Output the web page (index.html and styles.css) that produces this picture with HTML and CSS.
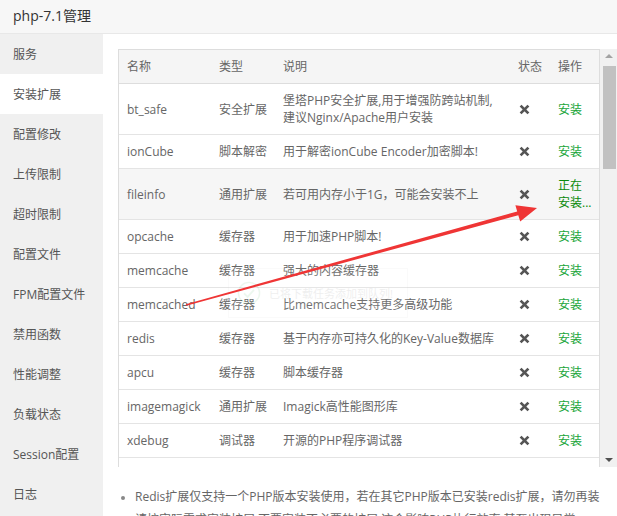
FILE: index.html
```html
<!DOCTYPE html>
<html lang="zh-CN">
<head>
<meta charset="utf-8">
<title>php-7.1管理</title>
<link rel="stylesheet" href="styles.css">
</head>
<body>
<div class="page">
  <div class="titlebar">php-7.1管理</div>
  <div class="main">
    <ul class="sidebar">
      <li>服务</li>
      <li class="active">安装扩展</li>
      <li>配置修改</li>
      <li>上传限制</li>
      <li>超时限制</li>
      <li>配置文件</li>
      <li>FPM配置文件</li>
      <li>禁用函数</li>
      <li>性能调整</li>
      <li>负载状态</li>
      <li>Session配置</li>
      <li>日志</li>
    </ul>
    <div class="content">
      <div class="tbl-wrap">
        <div class="viewport">
          <table class="ext">
            <colgroup>
              <col class="c1"><col class="c2"><col class="c3"><col class="c4"><col class="c5">
            </colgroup>
            <thead>
              <tr><th>名称</th><th>类型</th><th>说明</th><th>状态</th><th>操作</th></tr>
            </thead>
            <tbody>
              <tr><td>bt_safe</td><td>安全扩展</td><td>堡塔PHP安全扩展,用于增强防跨站机制,<br>建议Nginx/Apache用户安装</td><td><svg class="x" viewBox="0 0 11 11"><path d="M1.6 1.6L9.4 9.4M9.4 1.6L1.6 9.4"/></svg></td><td class="ok">安装</td></tr>
              <tr><td>ionCube</td><td>脚本解密</td><td>用于解密ionCube Encoder加密脚本!</td><td><svg class="x" viewBox="0 0 11 11"><path d="M1.6 1.6L9.4 9.4M9.4 1.6L1.6 9.4"/></svg></td><td class="ok">安装</td></tr>
              <tr class="hover"><td>fileinfo</td><td>通用扩展</td><td>若可用内存小于1G，可能会安装不上</td><td><svg class="x" viewBox="0 0 11 11"><path d="M1.6 1.6L9.4 9.4M9.4 1.6L1.6 9.4"/></svg></td><td class="busy">正在安装...</td></tr>
              <tr><td>opcache</td><td>缓存器</td><td>用于加速PHP脚本!</td><td><svg class="x" viewBox="0 0 11 11"><path d="M1.6 1.6L9.4 9.4M9.4 1.6L1.6 9.4"/></svg></td><td class="ok">安装</td></tr>
              <tr><td>memcache</td><td>缓存器</td><td>强大的内容缓存器</td><td><svg class="x" viewBox="0 0 11 11"><path d="M1.6 1.6L9.4 9.4M9.4 1.6L1.6 9.4"/></svg></td><td class="ok">安装</td></tr>
              <tr><td>memcached</td><td>缓存器</td><td>比memcache支持更多高级功能</td><td><svg class="x" viewBox="0 0 11 11"><path d="M1.6 1.6L9.4 9.4M9.4 1.6L1.6 9.4"/></svg></td><td class="ok">安装</td></tr>
              <tr><td>redis</td><td>缓存器</td><td>基于内存亦可持久化的Key-Value数据库</td><td><svg class="x" viewBox="0 0 11 11"><path d="M1.6 1.6L9.4 9.4M9.4 1.6L1.6 9.4"/></svg></td><td class="ok">安装</td></tr>
              <tr><td>apcu</td><td>缓存器</td><td>脚本缓存器</td><td><svg class="x" viewBox="0 0 11 11"><path d="M1.6 1.6L9.4 9.4M9.4 1.6L1.6 9.4"/></svg></td><td class="ok">安装</td></tr>
              <tr><td>imagemagick</td><td>通用扩展</td><td>Imagick高性能图形库</td><td><svg class="x" viewBox="0 0 11 11"><path d="M1.6 1.6L9.4 9.4M9.4 1.6L1.6 9.4"/></svg></td><td class="ok">安装</td></tr>
              <tr><td>xdebug</td><td>调试器</td><td>开源的PHP程序调试器</td><td><svg class="x" viewBox="0 0 11 11"><path d="M1.6 1.6L9.4 9.4M9.4 1.6L1.6 9.4"/></svg></td><td class="ok">安装</td></tr>
            </tbody>
          </table>
        </div>
        <div class="scrollbar">
          <span class="arrow up"></span>
          <div class="track"><div class="thumb"></div></div>
          <span class="arrow down"></span>
        </div>
      </div>
      <ul class="notes">
        <li>Redis扩展仅支持一个PHP版本安装使用，若在其它PHP版本已安装redis扩展，请勿再装</li>
        <li>请按实际需求安装扩展,不要安装不必要的扩展,这会影响PHP执行效率,甚至出现异常</li>
      </ul>
    </div>
  </div>

  <div class="toast">
    <svg class="toast-icon" viewBox="0 0 34 34"><circle cx="17" cy="17" r="15"/><path d="M10 17.5l5 5 9-10"/></svg>
    <span>已将下载任务添加到队列!</span>
  </div>

  <svg class="annot" viewBox="0 0 617 516" width="617" height="516">
    <polygon points="186.2,305.8 185.8,304.2 517.2,211.4 515.4,205.2 537,208 520.2,221.4 518.3,215.2" />
  </svg>
</div>
</body>
</html>
```
FILE: styles.css
```css
* { box-sizing: border-box; }
html, body { margin: 0; padding: 0; }
body {
  width: 617px;
  height: 516px;
  overflow: hidden;
  background: #fff;
  font-family: "Open Sans", "Noto Sans CJK SC", sans-serif;
  font-size: 12px;
  color: #666;
}
.page {
  position: relative;
  width: 617px;
  height: 516px;
  overflow: hidden;
}
.titlebar {
  height: 34px;
  line-height: 32px;
  padding-left: 13px;
  font-size: 14px;
  color: #333;
  background: #f7f7f7;
  border-bottom: 1px solid #e8e8e8;
}
.main {
  display: flex;
  height: 482px;
}
.sidebar {
  list-style: none;
  margin: 0;
  padding: 0;
  width: 103px;
  flex: none;
  background: #f0f0f0;
}
.sidebar li {
  height: 40px;
  line-height: 38px;
  padding-top: 2px;
  padding-left: 13px;
  color: #555;
  white-space: nowrap;
}
.sidebar li.active {
  background: #fff;
}
.content {
  flex: 1;
  padding-top: 15px;
  padding-left: 15px;
  min-width: 0;
}
.tbl-wrap {
  display: flex;
  height: 418px;
}
.viewport {
  flex: 1;
  overflow: hidden;
  border: 1px solid #dddddd;
  border-bottom: none;
}
.ext {
  width: 100%;
  border-collapse: collapse;
  table-layout: fixed;
}
.ext col.c1 { width: 92px; }
.ext col.c2 { width: 64px; }
.ext col.c3 { width: 235px; }
.ext col.c4 { width: 40px; }
.ext col.c5 { width: 49px; }
.ext th, .ext td {
  padding: 8px 8px;
  line-height: 17px;
  text-align: left;
  font-weight: normal;
  border-bottom: 1px solid #e4e4e4;
  vertical-align: middle;
  color: #666;
}
.ext th {
  background: #f5f5f5;
  border-bottom-color: #dddddd;
}
.ext tr.hover td { background: #f6f6f6; }
.ext td.ok { color: #20a53a; }
.ext td.busy { color: #0a8a0a; padding-right: 7px; }
.x {
  display: block;
  width: 11px;
  height: 11px;
  margin-left: 1px;
}
.x path {
  fill: none;
  stroke: #555;
  stroke-width: 2.7;
  stroke-linecap: butt;
}
.scrollbar {
  width: 17px;
  flex: none;
  background: #f1f1f1;
  display: flex;
  flex-direction: column;
  align-items: center;
}
.arrow {
  width: 0;
  height: 0;
  border-left: 4px solid transparent;
  border-right: 4px solid transparent;
  flex: none;
}
.arrow.up {
  margin-top: 5px;
  border-bottom: 4px solid #a3a3a3;
}
.arrow.down {
  margin-bottom: 5px;
  border-top: 4px solid #505050;
}
.track {
  flex: 1;
  width: 100%;
  padding: 8px 1px 0 3px;
}
.thumb {
  height: 103px;
  background: #c1c1c1;
}
.notes {
  margin: 18px 0 0 0;
  padding: 0 0 0 17px;
  color: #666;
}
.notes li {
  line-height: 23px;
  white-space: nowrap;
}
.notes li::marker {
  color: #888;
  font-size: 10px;
}
.toast {
  position: absolute;
  left: 228px;
  top: 268px;
  width: 180px;
  height: 50px;
  display: flex;
  align-items: center;
  gap: 8px;
  padding-left: 8px;
  background: #fff;
  border: 1px solid #ccc;
  opacity: 0.08;
  font-size: 11px;
  color: #333;
  white-space: nowrap;
}
.toast-icon {
  width: 24px;
  height: 24px;
  flex: none;
}
.toast-icon circle { fill: none; stroke: #20a53a; stroke-width: 2; }
.toast-icon path { fill: none; stroke: #20a53a; stroke-width: 2.5; }
.annot {
  position: absolute;
  left: 0;
  top: 0;
  pointer-events: none;
}
.annot polygon {
  fill: #ef3535;
}
```
